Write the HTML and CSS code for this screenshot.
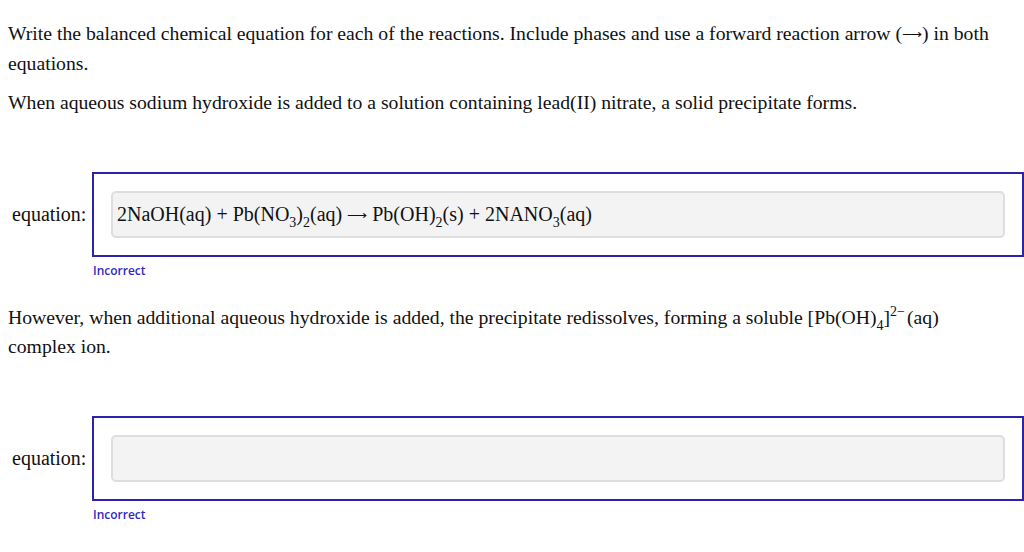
FILE: index.html
```html
<!DOCTYPE html>
<html>
<head>
<meta charset="utf-8">
<link rel="stylesheet" href="styles.css">
</head>
<body>
<div class="page">
  <p class="text">Write the balanced chemical equation for each of the reactions. Include phases and use a forward reaction arrow (<span class="arrow">⟶</span>) in both equations.</p>
  <p class="text">When aqueous sodium hydroxide is added to a solution containing lead(II) nitrate, a solid precipitate forms.</p>

  <div class="question q1">
    <div class="row">
      <div class="label">equation:</div>
      <div class="answer-box">
        <div class="input">2NaOH(aq) + Pb(NO<sub>3</sub>)<sub>2</sub>(aq) <span class="arrow">⟶</span> Pb(OH)<sub>2</sub>(s) + 2NANO<sub>3</sub>(aq)</div>
      </div>
    </div>
    <div class="status">Incorrect</div>
  </div>

  <p class="text">However, when additional aqueous hydroxide is added, the precipitate redissolves, forming a soluble [Pb(OH)<sub>4</sub>]<sup>2−</sup>(aq) complex ion.</p>

  <div class="question q2">
    <div class="row">
      <div class="label">equation:</div>
      <div class="answer-box">
        <div class="input"></div>
      </div>
    </div>
    <div class="status">Incorrect</div>
  </div>
</div>
</body>
</html>
```

FILE: styles.css
```css
html, body {
  margin: 0;
  padding: 0;
  background: #ffffff;
}

.page {
  padding: 19px 0 0 8px;
  font-family: "Liberation Serif", "Times New Roman", serif;
  color: #111111;
}

.text {
  margin: 0 0 10px 0;
  max-width: 996px;
  font-size: 19.7px;
  line-height: 29px;
}

.arrow {
  font-size: 14px;
  vertical-align: 1px;
}

sub, sup {
  font-size: 14px;
  line-height: 0;
  position: relative;
  vertical-align: baseline;
}

sub {
  top: 6px;
}

sup {
  top: -8px;
  margin-right: 2px;
}

.question.q1 {
  margin-top: 55px;
}

.question.q2 {
  margin-top: 55px;
}

.row {
  display: flex;
  align-items: center;
}

.label {
  width: 84px;
  font-size: 20px;
  padding-left: 4px;
  box-sizing: border-box;
}

.answer-box {
  flex: 1;
  border: 2px solid #2d22b0;
  padding: 17px;
}

.input {
  height: 47px;
  box-sizing: border-box;
  background: #f3f3f3;
  border: 2px solid #dedede;
  border-radius: 5px;
  padding: 0 4px;
  font-size: 20px;
  line-height: 43px;
  white-space: nowrap;
}

.status {
  margin: 6px 0 0 85px;
  font-family: "Open Sans", "Noto Sans", sans-serif;
  font-weight: 600;
  font-size: 12px;
  line-height: 16px;
  color: #3428bd;
}

.q1 + .text {
  margin-top: 24px;
}
```
